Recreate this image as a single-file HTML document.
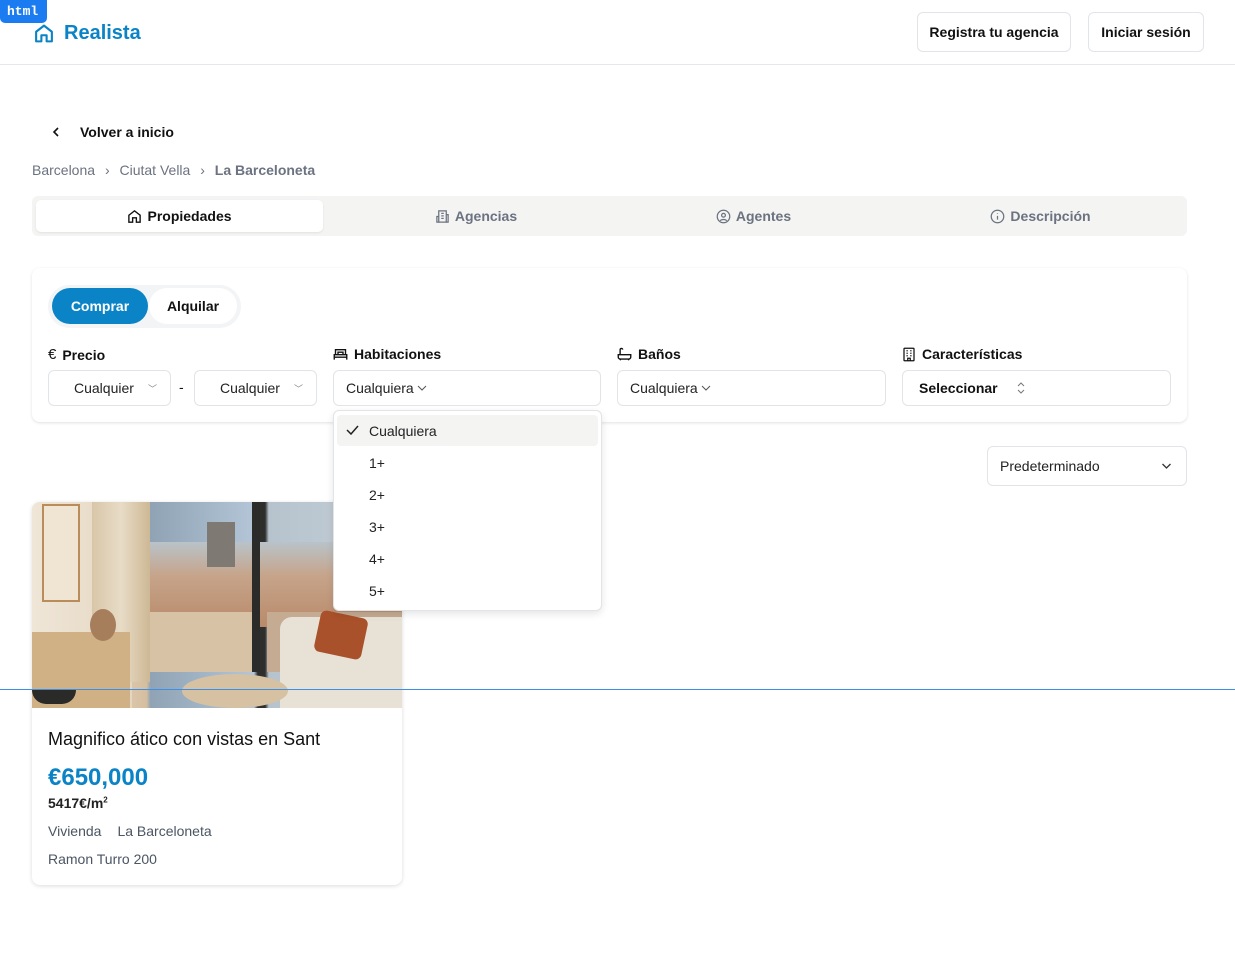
<!DOCTYPE html>
<html><head><meta charset="utf-8"><style>
*{box-sizing:border-box;margin:0;padding:0}
body{width:1235px;height:957px;background:#fff;font-family:"Liberation Sans",sans-serif;color:#111;position:relative;overflow:hidden;font-size:14px}
.a{position:absolute}
.btn{position:absolute;border:1px solid #e2e4e8;border-radius:6px;background:#fff;font-size:14px;font-weight:bold;display:flex;align-items:center;justify-content:center;color:#111}
.sel{position:absolute;border:1px solid #e2e4e8;border-radius:6px;background:#fff;height:36px;display:flex;align-items:center;font-size:14px;color:#222}
.lbl{position:absolute;top:346px;font-size:14px;font-weight:bold;display:flex;align-items:center;gap:6px;color:#111}
.tab{position:absolute;top:200px;height:32px;display:flex;align-items:center;justify-content:center;gap:5px;font-size:14px;color:#6b7280;font-weight:bold}
.item{position:absolute;left:337px;width:261px;height:31px;display:flex;align-items:center;padding-left:32px;font-size:14px;color:#222}
svg{display:block}
</style></head><body>
<div class="a" style="left:0;top:0;width:47px;height:23px;background:#1a7cf0;border-radius:0 0 5px 5px;color:#fff;font-family:'Liberation Mono',monospace;font-size:13px;font-weight:bold;padding:4px 0 0 7px;z-index:5">html</div>
<svg class="a" style="left:33px;top:23px" width="22" height="21" viewBox="0 0 24 24" fill="none" stroke="#0a84c6" stroke-width="2.4" stroke-linejoin="round"><path d="M3 10 12 3l9 7v11H15v-7H9v7H3z"/></svg>
<div class="a" style="left:64px;top:22px;font-size:20px;font-weight:bold;color:#0a84c6">Realista</div>
<div class="btn" style="left:917px;top:12px;width:154px;height:40px">Registra tu agencia</div>
<div class="btn" style="left:1088px;top:12px;width:116px;height:40px">Iniciar sesión</div>
<div class="a" style="left:0;top:64px;width:1235px;height:1px;background:#e5e7eb"></div>

<svg class="a" style="left:50px;top:126px" width="12" height="12" viewBox="0 0 12 12" fill="none" stroke="#111" stroke-width="1.6"><path d="M8 2 4 6l4 4"/></svg>
<div class="a" style="left:80px;top:124px;font-size:14px;font-weight:bold">Volver a inicio</div>
<div class="a" style="left:32px;top:162px;font-size:14px;color:#6b7280">Barcelona <span style="margin:0 6px">›</span> Ciutat Vella <span style="margin:0 6px">›</span> <b>La Barceloneta</b></div>

<div class="a" style="left:32px;top:196px;width:1155px;height:40px;background:#f4f4f3;border-radius:6px"></div>
<div class="a" style="left:36px;top:200px;width:287px;height:32px;background:#fff;border-radius:5px;box-shadow:0 1px 2px rgba(0,0,0,.08)"></div>
<div class="tab" style="left:36px;width:287px;color:#111"><svg width="15" height="15" viewBox="0 0 24 24" fill="none" stroke="#111" stroke-width="2.2"><path d="M3 10 12 3l9 7v11H15v-7H9v7H3z"/></svg>Propiedades</div>
<div class="tab" style="left:323px;width:306px"><svg width="15" height="15" viewBox="0 0 24 24" fill="none" stroke="#6b7280" stroke-width="2"><rect x="6" y="3" width="12" height="18"/><path d="M6 12H3v9h3M18 9h3v12h-3M10 7h4M10 11h4M10 15h4"/></svg>Agencias</div>
<div class="tab" style="left:610px;width:287px"><svg width="15" height="15" viewBox="0 0 24 24" fill="none" stroke="#6b7280" stroke-width="2"><circle cx="12" cy="12" r="10"/><circle cx="12" cy="10" r="3"/><path d="M7 19c1-3 9-3 10 0"/></svg>Agentes</div>
<div class="tab" style="left:897px;width:287px"><svg width="15" height="15" viewBox="0 0 24 24" fill="none" stroke="#6b7280" stroke-width="2"><circle cx="12" cy="12" r="10"/><path d="M12 11v6M12 7v1"/></svg>Descripción</div>

<div class="a" style="left:32px;top:268px;width:1155px;height:154px;background:#fff;border-radius:8px;box-shadow:0 1px 3px rgba(0,0,0,.12)"></div>
<div class="a" style="left:48px;top:285px;width:193px;height:43px;background:#f3f4f6;border-radius:22px"></div>
<div class="a" style="left:52px;top:288px;width:96px;height:36px;background:#0a84c6;border-radius:18px;color:#fff;font-weight:bold;font-size:14px;display:flex;align-items:center;justify-content:center">Comprar</div>
<div class="a" style="left:149px;top:288px;width:88px;height:36px;background:#fff;border-radius:18px;font-weight:bold;font-size:14px;display:flex;align-items:center;justify-content:center">Alquilar</div>

<div class="lbl" style="left:48px"><span style="font-size:15px;font-weight:normal">€</span> Precio</div>
<div class="lbl" style="left:333px"><svg width="15" height="14" viewBox="0 0 24 22" fill="none" stroke="#111" stroke-width="2.2"><path d="M2 20V12h20v8M2 16h20M4 12V4h16v8M8 12V8h8v4"/></svg>Habitaciones</div>
<div class="lbl" style="left:617px"><svg width="15" height="14" viewBox="0 0 24 22" fill="none" stroke="#111" stroke-width="2.2"><path d="M2 12h20v4a3 3 0 0 1-3 3H5a3 3 0 0 1-3-3zM5 12V4a2 2 0 0 1 4 0M6 19l-1 2M18 19l1 2"/></svg>Baños</div>
<div class="lbl" style="left:902px"><svg width="14" height="15" viewBox="0 0 20 24" fill="none" stroke="#111" stroke-width="2"><rect x="2" y="2" width="16" height="20" rx="1"/><path d="M6 6h2M12 6h2M6 10h2M12 10h2M6 14h2M12 14h2M8 22v-4h4v4"/></svg>Características</div>

<div class="sel" style="left:48px;top:370px;width:123px;padding-left:25px">Cualquier<span style="margin-left:14px;font-size:9px;color:#888">﹀</span></div>
<div class="a" style="left:179px;top:379px">-</div>
<div class="sel" style="left:194px;top:370px;width:123px;padding-left:25px">Cualquier<span style="margin-left:14px;font-size:9px;color:#888">﹀</span></div>
<div class="sel" style="left:333px;top:370px;width:268px;padding-left:12px">Cualquiera<svg style="margin-left:3px" width="10" height="8" viewBox="0 0 10 8" fill="none" stroke="#555"><path d="M1 2l4 4 4-4"/></svg></div>
<div class="sel" style="left:617px;top:370px;width:269px;padding-left:12px">Cualquiera<svg style="margin-left:3px" width="10" height="8" viewBox="0 0 10 8" fill="none" stroke="#555"><path d="M1 2l4 4 4-4"/></svg></div>
<div class="sel" style="left:902px;top:370px;width:269px;padding-left:16px;font-weight:bold;color:#111">Seleccionar<svg style="margin-left:18px" width="10" height="14" viewBox="0 0 10 14" fill="none" stroke="#777"><path d="M2 5l3-3 3 3M2 9l3 3 3-3"/></svg></div>

<div class="sel" style="left:987px;top:446px;width:200px;height:40px;padding-left:12px">Predeterminado<svg style="margin-left:auto;margin-right:14px" width="11" height="8" viewBox="0 0 10 8" fill="none" stroke="#333" stroke-width="1.3"><path d="M1 2l4 4 4-4"/></svg></div>

<div class="a" style="left:32px;top:502px;width:370px;height:383px;background:#fff;border-radius:8px;box-shadow:0 1px 4px rgba(0,0,0,.14);overflow:hidden">
 <div class="a" style="left:0;top:0;width:370px;height:206px;background:linear-gradient(90deg,#e9dccb 0,#ddc9ad 25%,#d5bea0 31%,#8fa3b5 32%,#b3c5d6 60%,#2e2e2c 61%,#2e2e2c 63%,#b6c3cd 64%,#c6d0d8 100%)"></div>
 <div class="a" style="left:118px;top:40px;width:252px;height:85px;background:linear-gradient(180deg,#b9c3c9,#c6a48a 40%,#b98a6a)"></div>
 <div class="a" style="left:118px;top:110px;width:105px;height:60px;background:#d8c2a5"></div>
 <div class="a" style="left:235px;top:110px;width:135px;height:60px;background:#c4ab92"></div>
 <div class="a" style="left:175px;top:20px;width:28px;height:45px;background:#7f7973"></div>
 <div class="a" style="left:220px;top:0;width:8px;height:170px;background:#2b2b2a"></div>
 <div class="a" style="left:0;top:0;width:100px;height:206px;background:linear-gradient(90deg,#efe6d8,#e5d6c1)"></div>
 <div class="a" style="left:10px;top:2px;width:38px;height:98px;border:2px solid #b98c5a;background:#f0e4d2"></div>
 <div class="a" style="left:60px;top:0;width:58px;height:180px;background:linear-gradient(90deg,#d8c6a8,#e8dcc7,#cdb894)"></div>
 <div class="a" style="left:0;top:130px;width:98px;height:76px;background:#cfb185"></div>
 <div class="a" style="left:58px;top:107px;width:26px;height:32px;border-radius:50%;background:#a77e5b"></div>
 <div class="a" style="left:248px;top:115px;width:122px;height:91px;background:#e8e2d6;border-radius:12px 0 0 0"></div>
 <div class="a" style="left:285px;top:112px;width:48px;height:42px;background:#a9512a;border-radius:6px;transform:rotate(12deg)"></div>
 <div class="a" style="left:150px;top:172px;width:106px;height:34px;border-radius:50%;background:#d6c1a2"></div>
 <div class="a" style="left:0;top:188px;width:44px;height:14px;border-radius:0 0 20px 20px;background:#2a2a28"></div>
</div>
<div class="a" style="left:48px;top:729px;font-size:18px;color:#111">Magnifico ático con vistas en Sant</div>
<div class="a" style="left:48px;top:764px;font-size:24px;font-weight:bold;color:#0a84c6">€650,000</div>
<div class="a" style="left:48px;top:795px;font-size:14px;font-weight:bold;color:#222">5417€/m<sup style="font-size:8px">2</sup></div>
<div class="a" style="left:48px;top:823px;font-size:14px;color:#4b5563">Vivienda<span style="margin-left:16px">La Barceloneta</span></div>
<div class="a" style="left:48px;top:851px;font-size:14px;color:#4b5563">Ramon Turro 200</div>

<div class="a" style="left:333px;top:410px;width:269px;height:201px;background:#fff;border:1px solid #e2e4e8;border-radius:6px;box-shadow:0 3px 8px rgba(0,0,0,.1)"></div>
<div class="item" style="top:415px;background:#f4f4f3;border-radius:4px"><svg class="a" style="left:9px;top:10px" width="13" height="10" viewBox="0 0 13 10" fill="none" stroke="#222" stroke-width="1.5"><path d="M1 5l4 4 7-8"/></svg>Cualquiera</div>
<div class="item" style="top:447px">1+</div>
<div class="item" style="top:479px">2+</div>
<div class="item" style="top:511px">3+</div>
<div class="item" style="top:543px">4+</div>
<div class="item" style="top:575px">5+</div>

<div class="a" style="left:0;top:689px;width:1235px;height:1px;background:#3b8fe8;z-index:6"></div>
</body></html>
